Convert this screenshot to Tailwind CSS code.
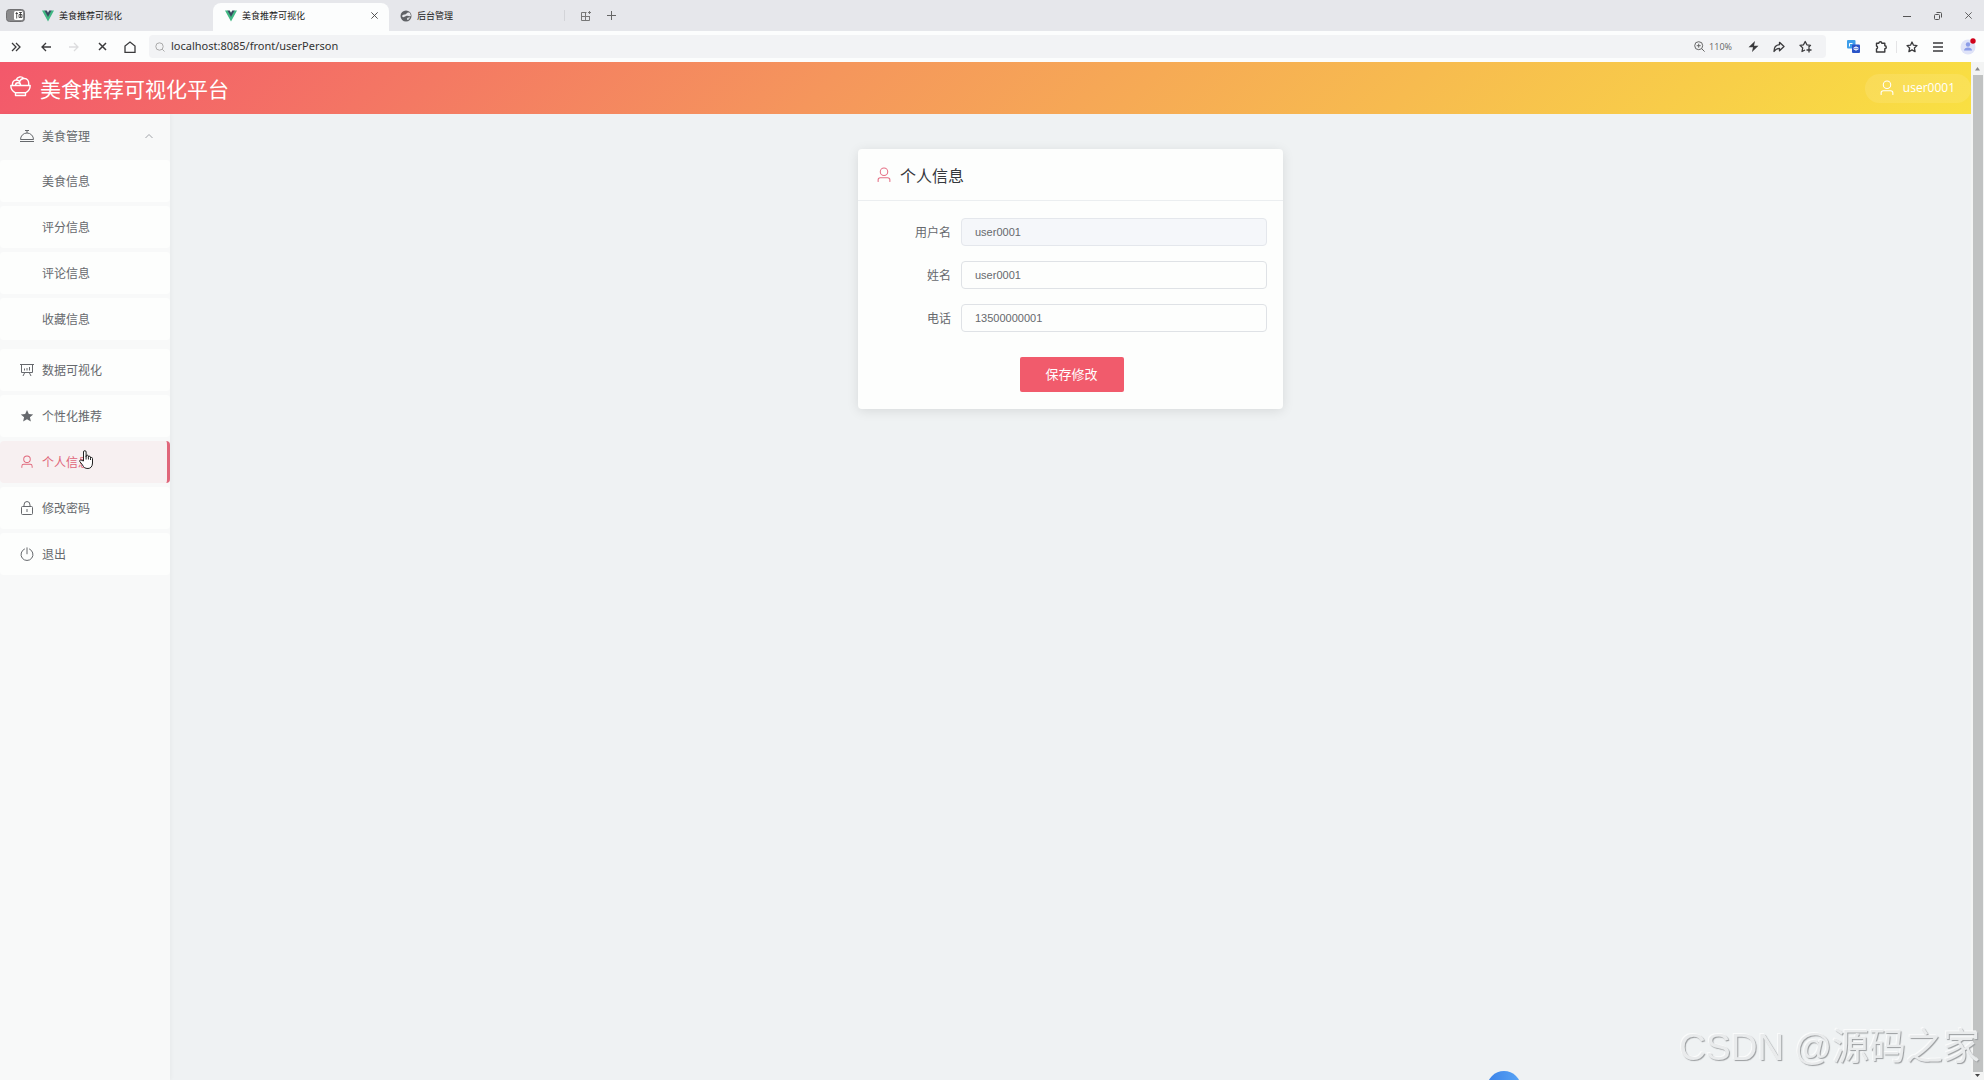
<!DOCTYPE html>
<html lang="zh-CN">
<head>
  <meta charset="UTF-8">
  <meta name="viewport" content="width=device-width, initial-scale=1.0">
  <title>美食推荐可视化</title>
  <script src="https://cdn.jsdelivr.net/npm/@tailwindcss/browser@4"></script>
</head>
<body class="h-screen flex flex-col overflow-hidden bg-[#eff2f3] font-['Open_Sans','Noto_Sans_CJK_SC',sans-serif] text-xs text-[#66696d]">
  <!-- shared icons -->
  <svg class="hidden">
    <symbol id="icon-user" viewBox="64 32 896 960"><path fill="currentColor" d="M512 512a192 192 0 1 0 0-384 192 192 0 0 0 0 384m0 64a256 256 0 1 1 0-512 256 256 0 0 1 0 512m320 320v-96a96 96 0 0 0-96-96H288a96 96 0 0 0-96 96v96a32 32 0 1 1-64 0v-96a160 160 0 0 1 160-160h448a160 160 0 0 1 160 160v96a32 32 0 1 1-64 0"/></symbol>
    <symbol id="icon-vue" viewBox="0 0 24 24"><path fill="#41b883" d="M0 1h6l6 11 6-11h6L12 23z"/><path fill="#35495e" d="M5 1h4.500l2.500 4.500L14.500 1H19l-7 13z"/></symbol>
    <symbol id="icon-close" viewBox="0 0 10 10"><path fill="none" stroke="currentColor" d="M1.500 1.500l7 7M8.500 1.500l-7 7"/></symbol>
  </svg>

  <!-- tab strip -->
  <div class="h-[31px] shrink-0 flex bg-[#e6e7eb] text-[9px] text-[#222]">
    <button class="w-9 pl-[6px] flex items-center" aria-label="侧边栏">
      <svg class="w-[19px] h-[13px]" viewBox="0 0 19 13"><rect x=".5" y=".5" width="18" height="12" rx="3" fill="#8a8a8c" stroke="#707072"/><rect x="8" y="2" width="9" height="9" rx="1.500" fill="#fff"/><path d="M9.500 4.500h2.500M10.700 3v6.500M13 3.500h3M13 5.500h3v3h-3zM14.500 3v5" stroke="#333" stroke-width=".8" fill="none"/></svg>
    </button>
    <a href="#" class="w-[177px] pl-[6px] flex items-center gap-[5px]">
      <svg class="w-3 h-3"><use href="#icon-vue"/></svg>
      <span>美食推荐可视化</span>
    </a>
    <a href="#" class="w-44 mt-[3px] pb-[3px] pl-3 pr-[10px] flex items-center gap-[5px] rounded-t-lg bg-[#fcfdfd]">
      <svg class="w-3 h-3"><use href="#icon-vue"/></svg>
      <span class="flex-1">美食推荐可视化</span>
      <svg class="w-[9px] h-[9px] text-[#444]"><use href="#icon-close"/></svg>
    </a>
    <a href="#" class="w-44 my-[10px] pl-[11px] flex items-center gap-[5px] border-r border-[#d3d4d8]">
      <svg class="w-3 h-3" viewBox="0 0 12 12"><circle cx="6" cy="6" r="5.500" fill="#606266"/><path fill="#e6e7eb" d="M2 6c1-2 3-1 4-2s2-2 4-1l1 3c-2 1-3-1-5 0S3 8 2 6z"/><path fill="#d0d2d6" d="M7 8l3-1-1 2.500-2 .5z"/></svg>
      <span>后台管理</span>
    </a>
    <button class="w-[42px] flex items-center justify-center text-[#777]" aria-label="标签页管理">
      <svg class="w-[10px] h-[10px]" viewBox="0 0 10 10" fill="none" stroke="currentColor"><path d="M5.500 1.500h-5v8h8V5M.5 5.500h8M4.500 1.500v8M8.500 0v3M7 1.500h3"/></svg>
    </button>
    <button class="w-[10px] flex items-center text-[#666]" aria-label="新建标签页">
      <svg class="w-[9px] h-[9px]" viewBox="0 0 9 9" fill="none" stroke="currentColor"><path d="M4.500 0v9M0 4.500h9"/></svg>
    </button>
    <div class="ml-auto flex text-[#555]">
      <button class="w-[31px] flex items-center justify-center" aria-label="最小化"><svg class="w-2 h-2" viewBox="0 0 8 8" stroke="currentColor"><path d="M0 4.500h8"/></svg></button>
      <button class="w-[31px] flex items-center justify-center" aria-label="还原"><svg class="w-2 h-2" viewBox="0 0 8 8" fill="none" stroke="currentColor"><rect x=".5" y="2.500" width="5" height="5" rx="1"/><path d="M2.500.5h4a1 1 0 0 1 1 1v4"/></svg></button>
      <button class="w-[31px] flex items-center justify-center" aria-label="关闭"><svg class="w-[9px] h-[9px]"><use href="#icon-close"/></svg></button>
    </div>
  </div>

  <!-- address bar -->
  <div class="h-[31px] shrink-0 flex items-center bg-[#fcfdfd] pl-[2px] pr-[3px] text-[#3a3a3c]">
    <button class="w-7 mr-[2px] flex justify-center" aria-label="展开"><svg class="w-[10px] h-[10px]" viewBox="0 0 10 10" fill="none" stroke="currentColor" stroke-width="1.300"><path d="M1 1l4 4-4 4M5 1l4 4-4 4"/></svg></button>
    <button class="w-7 flex justify-center" aria-label="后退"><svg class="w-[10px] h-[10px]" viewBox="0 0 10 10" fill="none" stroke="currentColor" stroke-width="1.300"><path d="M10 5H1M5 1L1 5l4 4"/></svg></button>
    <button class="w-7 flex justify-center text-[#dcdcde]" aria-label="前进"><svg class="w-[10px] h-[10px]" viewBox="0 0 10 10" fill="none" stroke="currentColor" stroke-width="1.300"><path d="M0 5h9M5 1l4 4-4 4"/></svg></button>
    <button class="w-7 flex justify-center" aria-label="停止"><svg class="w-[9px] h-[9px]" viewBox="0 0 9 9" stroke="currentColor" stroke-width="1.500"><path d="M1 1l7 7M8 1L1 8"/></svg></button>
    <button class="w-7 flex justify-center" aria-label="主页"><svg class="w-3 h-3" viewBox="0 0 12 12" fill="none" stroke="currentColor" stroke-width="1.300"><path d="M1 11.300V5l5-4 5 4v6.300z"/></svg></button>
    <div class="h-[23px] ml-[5px] pl-[6px] pr-2 flex-1 flex items-center rounded bg-[#f2f3f5]">
      <svg class="w-[10px] h-[10px] text-[#aaa]" viewBox="0 0 10 10" fill="none" stroke="currentColor"><circle cx="4.500" cy="4.500" r="3.700"/><path d="M7.200 7.200L9.500 9.500"/></svg>
      <input type="text" aria-label="地址" value="localhost:8085/front/userPerson" class="ml-[6px] flex-1 bg-transparent outline-none font-['Noto_Sans'] text-[11px] text-[#333]">
      <svg class="w-[11px] h-[11px] mr-1 text-[#666]" viewBox="0 0 11 11" fill="none" stroke="currentColor"><circle cx="4.700" cy="4.700" r="4"/><path d="M7.600 7.600l3 3M2.700 4.700h4M4.700 2.700v4"/></svg>
      <span class="mr-2 text-[9px] text-[#666]">110%</span>
      <button class="w-[26px] flex justify-center" aria-label="加速"><svg class="w-[11px] h-[11px]" viewBox="0 0 11 11" fill="currentColor"><path d="M7 0L.5 6.300H5L4 11l6.500-6.300H6z"/></svg></button>
      <button class="w-[26px] flex justify-center" aria-label="分享"><svg class="w-3 h-3" viewBox="0 0 12 12" fill="none" stroke="currentColor" stroke-width="1.300" stroke-linejoin="round"><path d="M6.500 1.300L11 5.500 6.500 9.700V7.300C4 7.300 2.300 8.300 1 10.500 1 6.500 3 4 6.500 3.700z"/></svg></button>
      <button class="w-[26px] flex justify-center" aria-label="收藏"><svg class="w-[13px] h-[13px]" viewBox="0 0 13 13" fill="none" stroke="currentColor" stroke-width="1.300" stroke-linejoin="round"><path d="M6 10L3 11.500l.7-3.600L1 5.300l3.500-.5L6.200 1.500l1.700 3.300 3.600.5L9.500 7.200M10 7.500v5M7.500 10h5"/></svg></button>
    </div>
    <button class="w-[26px] ml-[14px] flex justify-center" aria-label="翻译"><svg class="w-[13px] h-[13px]" viewBox="0 0 13 13"><rect width="8.500" height="8.500" rx="1" fill="#3d9eea"/><path d="M2.500 6.500v-3h3" stroke="#fff" fill="none"/><rect x="5" y="4.500" width="8" height="8.500" rx="1" fill="#2b55c8"/><path d="M7 7.500h4v2H7zM9 6v5" stroke="#fff" stroke-width=".8" fill="none"/></svg></button>
    <button class="w-[26px] ml-[2px] flex justify-center" aria-label="扩展"><svg class="w-3 h-3" viewBox="0 0 12 12" fill="none" stroke="currentColor" stroke-width="1.400" stroke-linejoin="round"><path d="M1.500 2.200h2.300a1.500 1.500 0 0 1 3 0h3v2.600a1.500 1.500 0 0 1 0 3v3.200H1.500V8a1.600 1.600 0 0 0 0-3z"/></svg></button>
    <span class="w-px h-3 mx-[2px] bg-[#e4e4e6]"></span>
    <button class="w-[26px] flex justify-center" aria-label="收藏夹"><svg class="w-3 h-3" viewBox="0 0 12 12" fill="none" stroke="currentColor" stroke-width="1.300" stroke-linejoin="round"><path d="M6 1l1.500 3.200 3.500.4-2.600 2.400.7 3.600L6 8.900l-3.100 1.700.7-3.600L1 4.600l3.500-.4z"/></svg></button>
    <button class="w-[26px] flex justify-center" aria-label="菜单"><svg class="w-[10px] h-[10px]" viewBox="0 0 10 10" stroke="currentColor" stroke-width="1.300"><path d="M0 1h10M0 5h10M0 9h10"/></svg></button>
    <button class="w-[26px] ml-1 flex justify-center" aria-label="账户"><svg class="w-[17px] h-[17px]" viewBox="0 0 17 17"><circle cx="8" cy="9" r="7.500" fill="#dfe3f8"/><circle cx="8" cy="6.500" r="2.200" fill="#8c9de8"/><path d="M4 12.500c0-4 8-4 8 0z" fill="#8c9de8"/><circle cx="13" cy="3" r="2.700" fill="#d0021b"/></svg></button>
  </div>

  <div class="flex-1 min-h-0 flex">
    <div class="flex-1 flex flex-col">
      <header class="h-[52px] shrink-0 pl-[10px] flex items-center justify-between bg-linear-[135deg,#f3586b,#f5965c_42%,#f9e042] text-white">
        <h1 class="flex items-center gap-[9px] text-[21px] font-['Noto_Sans_CJK_SC',sans-serif]">
          <svg class="w-[21px] h-[21px] mb-1" viewBox="0 0 21 21" fill="none" stroke="currentColor" stroke-width="1.400" stroke-linejoin="round"><path d="M.8 9.500h19.400c0 3.500-2 6-4.700 7.400v2.600h-10v-2.600C2.800 15.500.8 13 .8 9.500zM5.500 16.800h10M2.500 9.500C2 6 4 4 6.200 4c1-3.500 5.600-4 7.600-1.500C17 2 19.500 5 18.500 9.500M6.200 4c1.800 0 3.300 1 4 2.500M9.500 5.500c1-2 2.500-3 4.300-3M5.500 9.500c0-1.700 1-2.700 2.500-2.700s2.500 1 2.700 2.700"/></svg>
          <span>美食推荐可视化平台</span>
        </h1>
        <button class="h-[29px] pl-[14px] pr-4 flex items-center gap-2 rounded-full bg-white/10">
          <svg class="w-4 h-4"><use href="#icon-user"/></svg>
          <span>user0001</span>
        </button>
      </header>

      <div class="flex-1 flex">
        <aside class="w-[170px] shrink-0 bg-[#f8f9f9] shadow-[1px_0_4px_rgba(0,0,0,0.04)] font-['Noto_Sans_CJK_SC',sans-serif]">
          <nav>
            <button class="w-full h-[46px] pl-5 pr-[17px] pb-[2px] flex items-center gap-2">
              <svg class="w-[14px] h-[14px]" viewBox="0 0 14 14" fill="none" stroke="currentColor"><path d="M.5 10.500a6.500 6.500 0 0 1 13 0zM0 12.500h14M7 4V2M5 1.500h4"/></svg>
              <span class="flex-1 text-left">美食管理</span>
              <svg class="w-2 h-2 text-[#a0a3a8]" viewBox="0 0 8 8" fill="none" stroke="currentColor"><path d="M.5 6L4 2.500 7.500 6"/></svg>
            </button>
            <ul class="flex flex-col gap-1">
              <li><a href="#" class="h-[42px] pl-[42px] flex items-center rounded bg-[#fdfefd]">美食信息</a></li>
              <li><a href="#" class="h-[42px] pl-[42px] flex items-center rounded bg-[#fdfefd]">评分信息</a></li>
              <li><a href="#" class="h-[42px] pl-[42px] flex items-center rounded bg-[#fdfefd]">评论信息</a></li>
              <li><a href="#" class="h-[42px] pl-[42px] flex items-center rounded bg-[#fdfefd]">收藏信息</a></li>
            </ul>
            <ul class="mt-[9px] flex flex-col gap-1">
              <li>
                <a href="#" class="h-[42px] pl-5 flex items-center gap-2 rounded bg-[#fdfefd]">
                  <svg class="w-[14px] h-[14px]" viewBox="0 0 14 14" fill="none" stroke="currentColor"><path d="M0 1.500h14M1.500 1.500v8h11v-8M4.500 10l-1.500 3M9.500 10l1.500 3M4.500 5.500v2M7 5v2.500M9.500 4v3.500"/></svg>
                  数据可视化
                </a>
              </li>
              <li>
                <a href="#" class="h-[42px] pl-5 flex items-center gap-2 rounded bg-[#fdfefd]">
                  <svg class="w-[14px] h-[14px]" viewBox="0 0 14 14" fill="currentColor"><path d="M7 1l1.800 4 4.400.4-3.300 2.900 1 4.300L7 10.300l-3.900 2.300 1-4.300L.8 5.400 5.200 5z"/></svg>
                  个性化推荐
                </a>
              </li>
              <li class="relative">
                <a href="#" class="h-[42px] pl-5 flex items-center gap-2 rounded bg-[#f7f0f1] border-r-3 border-[#e0667a] text-[#e0667a]">
                  <svg class="w-[14px] h-[14px]"><use href="#icon-user"/></svg>
                  个人信息
                </a>
                <!-- pointer -->
                <svg class="absolute left-[79px] top-[9px] w-[14px] h-[19px]" viewBox="0 0 14 19" fill="#fff" stroke="#222" stroke-linejoin="round"><path d="M4.500 11V2a1.300 1.300 0 0 1 2.600 0v5V6a1.200 1.200 0 0 1 2.300 0v1.500V7a1.100 1.100 0 0 1 2.100 0v1.500a1 1 0 0 1 2 0V13c0 3.500-2 5.500-4.500 5.500-3 0-4.200-1-5.500-3.500L.8 11.500c-.6-1.300 1-2 1.900-1.100z"/><path d="M7.100 7v2.500M9.400 7.500v2M11.500 8.500v1.500"/></svg>
              </li>
              <li>
                <a href="#" class="h-[42px] pl-5 flex items-center gap-2 rounded bg-[#fdfefd]">
                  <svg class="w-[14px] h-[14px]" viewBox="0 0 14 14" fill="none" stroke="currentColor"><rect x="1.500" y="5.500" width="11" height="8" rx="1"/><path d="M4 5.500V4a3 3.500 0 0 1 6 0v1.500M7 8v3"/></svg>
                  修改密码
                </a>
              </li>
              <li>
                <a href="#" class="h-[42px] pl-5 flex items-center gap-2 rounded bg-[#fdfefd]">
                  <svg class="w-[14px] h-[14px]" viewBox="0 0 14 14" fill="none" stroke="currentColor" stroke-linecap="round"><path d="M4.500 2a6 6 0 1 0 5 0M7 .8v6"/></svg>
                  退出
                </a>
              </li>
            </ul>
          </nav>
        </aside>

        <main class="flex-1 pt-[35px] font-['Noto_Sans_CJK_SC',sans-serif]">
          <section class="w-[425px] mx-auto rounded bg-[#fdfefd] shadow-[0_2px_12px_rgba(0,0,0,0.1)]">
            <h2 class="h-[52px] px-[18px] flex items-center gap-2 border-b border-[#ebeef0] text-base text-[#35383c]">
              <svg class="w-4 h-4 text-[#e57086]"><use href="#icon-user"/></svg>
              个人信息
            </h2>
            <form class="py-[17px] pl-[18px] pr-4">
              <div class="flex flex-col gap-[15px]">
                <div class="flex items-center">
                  <label for="username" class="w-[85px] pr-[10px] text-right">用户名</label>
                  <input id="username" type="text" value="user0001" readonly class="h-7 flex-1 px-[13px] rounded border border-[#e4e7ec] bg-[#f5f7fa] font-['Liberation_Sans'] text-[11px]">
                </div>
                <div class="flex items-center">
                  <label for="name" class="w-[85px] pr-[10px] text-right">姓名</label>
                  <input id="name" type="text" value="user0001" class="h-7 flex-1 px-[13px] rounded border border-[#dfe2e6] font-['Liberation_Sans'] text-[11px]">
                </div>
                <div class="flex items-center">
                  <label for="phone" class="w-[85px] pr-[10px] text-right">电话</label>
                  <input id="phone" type="text" value="13500000001" class="h-7 flex-1 px-[13px] rounded border border-[#dfe2e6] font-['Liberation_Sans'] text-[11px]">
                </div>
              </div>
              <button type="button" class="block w-[104px] h-[35px] mt-[25px] mx-auto pb-[2px] rounded-xs bg-[#f15b6c] text-[13px] text-white">保存修改</button>
            </form>
          </section>
        </main>
      </div>
    </div>

    <!-- page scrollbar -->
    <div class="w-[13px] flex flex-col items-center bg-[#f3f4f4]">
      <svg class="w-[5px] h-[13px]" viewBox="0 0 5 13"><path fill="#888" d="M0 8.500L2.500 5 5 8.500z"/></svg>
      <div class="w-[10px] flex-1 bg-[#c0c2c2]"></div>
      <svg class="w-[5px] h-[8px]" viewBox="0 0 5 8"><path fill="#444" d="M0 2h5L2.500 5z"/></svg>
    </div>
  </div>

  <!-- floating ball and watermark lie over the page -->
  <div class="fixed -bottom-[25px] right-[463px] w-[34px] h-[34px] rounded-full bg-linear-to-r from-[#3b82e8] to-[#5aa5f5]"></div>
  <div class="fixed bottom-3 right-1 font-['Liberation_Sans','Noto_Sans_CJK_SC',sans-serif] text-[37px] leading-10 text-[#e9ebec] text-shadow-[1px_1px_1px_#9a9d9f,-1px_-1px_0_#fafbfb]">CSDN @源码之家</div>
</body>
</html>
